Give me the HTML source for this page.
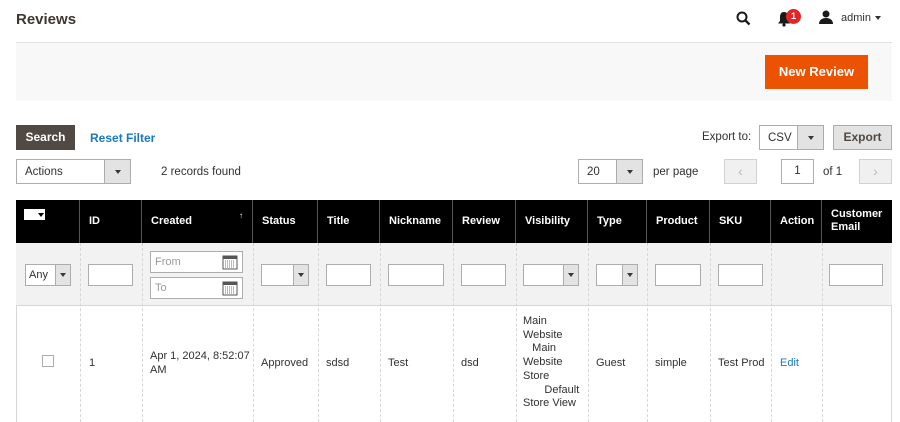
<!DOCTYPE html>
<html><head><meta charset="utf-8"><style>
*{box-sizing:border-box;margin:0;padding:0}
body{width:900px;height:422px;overflow:hidden;background:#fff;font-family:"Liberation Sans",sans-serif;color:#303030;font-size:11px;position:relative}
.a{position:absolute}
.inp{position:absolute;background:#fff;border:1px solid #adadad}
.sel{position:absolute;background:#fff;border:1px solid #adadad}
.sel .ar{position:absolute;right:0;top:0;bottom:0;background:#e3e3e3;border-left:1px solid #adadad}
.sel .ar:after{content:"";position:absolute;left:50%;top:50%;margin:-2px 0 0 -3px;border:3px solid transparent;border-top:4px solid #41362f;border-bottom:0}
.th{position:absolute;top:200px;height:43px;background:#000;color:#fff;font-weight:bold;font-size:11px;padding:15px 0 0 9px;border-right:1px solid #555}
.vl{position:absolute;top:243px;height:179px;border-left:1px dashed #d6d6d6}
.cell{position:absolute;font-size:11px;color:#303030;line-height:14px}
</style></head><body>
<div class="a" style="left:16px;top:11px;font-size:15px;font-weight:bold;color:#41362f">Reviews</div>
<svg class="a" style="left:736px;top:11px" width="15" height="15" viewBox="0 0 15 15"><circle cx="6" cy="6" r="4.5" fill="none" stroke="#1a1a1a" stroke-width="2"/><path d="M9.5 9.5L13.5 13.5" stroke="#1a1a1a" stroke-width="2.3"/></svg>
<svg class="a" style="left:777px;top:11px" width="14" height="16" viewBox="0 0 14 16"><path d="M7 1C4 1 3 3.5 3 6v4L1 12.5h12L11 10V6C11 3.5 10 1 7 1z" fill="#1a1a1a"/><circle cx="7" cy="14" r="1.6" fill="#1a1a1a"/></svg>
<div class="a" style="left:786px;top:9px;width:15px;height:15px;border-radius:50%;background:#e22626;color:#fff;font-size:9px;font-weight:bold;text-align:center;line-height:15px">1</div>
<svg class="a" style="left:819px;top:10px" width="14" height="14" viewBox="0 0 14 14"><circle cx="7" cy="4" r="3.5" fill="#1a1a1a"/><path d="M0 14c0-4 3-6 7-6s7 2 7 6z" fill="#1a1a1a"/></svg>
<div class="a" style="left:841px;top:12px;font-size:11px">admin</div>
<div class="a" style="left:875px;top:16px;border:3px solid transparent;border-top:4px solid #333"></div>
<div class="a" style="left:16px;top:42px;width:876px;height:59px;background:#f8f8f8;border-top:1px solid #e3e3e3"></div>
<div class="a" style="left:765px;top:55px;width:103px;height:34px;background:#eb5202;color:#fff;font-weight:bold;font-size:13px;text-align:center;line-height:34px">New Review</div>
<div class="a" style="left:16px;top:125px;width:59px;height:25px;background:#514943;color:#fff;font-weight:bold;font-size:12px;text-align:center;line-height:25px">Search</div>
<div class="a" style="left:90px;top:131px;color:#1979c3;font-weight:bold;font-size:12px">Reset Filter</div>
<div class="a" style="left:702px;top:131px;font-size:11.5px">Export to:</div>
<div class="sel" style="left:759px;top:125px;width:65px;height:25px"><span class="a" style="left:8px;top:6px;font-size:11.5px">CSV</span><div class="ar" style="width:26px"></div></div>
<div class="a" style="left:833px;top:125px;width:59px;height:25px;background:#e3e3e3;border:1px solid #adadad;font-weight:bold;font-size:12px;text-align:center;line-height:23px;color:#514943">Export</div>
<div class="sel" style="left:16px;top:159px;width:115px;height:25px"><span class="a" style="left:8px;top:6px;font-size:11.5px">Actions</span><div class="ar" style="width:26px"></div></div>
<div class="a" style="left:161px;top:166px;font-size:11.5px">2 records found</div>
<div class="sel" style="left:578px;top:159px;width:65px;height:25px"><span class="a" style="left:8px;top:6px;font-size:11.5px">20</span><div class="ar" style="width:26px"></div></div>
<div class="a" style="left:653px;top:166px;font-size:11.5px">per page</div>
<div class="a" style="left:724px;top:159px;width:33px;height:25px;background:#f0f0f0;border:1px solid #d1d1d1;color:#bbb;text-align:center;line-height:22px;font-size:14px">‹</div>
<div class="inp" style="left:781px;top:159px;width:33px;height:25px;text-align:center;line-height:23px;font-size:11.5px">1</div>
<div class="a" style="left:823px;top:166px;font-size:11.5px">of 1</div>
<div class="a" style="left:859px;top:159px;width:33px;height:25px;background:#f0f0f0;border:1px solid #d1d1d1;color:#bbb;text-align:center;line-height:22px;font-size:14px">›</div>

<div class="a" style="left:16px;top:243px;width:876px;height:63px;background:#f2f2f2;border-bottom:1px solid #d6d6d6"></div>
<div class="a" style="left:16px;top:306px;width:876px;height:116px;background:#fff;border-left:1px solid #d6d6d6;border-right:1px solid #d6d6d6"></div>

<div class="th" style="left:16px;width:64px;padding:0"><div class="a" style="left:8px;top:9px;width:21px;height:11px;background:#fff"></div><div class="a" style="left:22px;top:13px;border:3px solid transparent;border-top:4px solid #000"></div></div>
<div class="th" style="left:80px;width:62px">ID</div>
<div class="th" style="left:142px;width:111px">Created<span class="a" style="left:97px;top:11px;font-size:8px">↑</span></div>
<div class="th" style="left:253px;width:65px">Status</div>
<div class="th" style="left:318px;width:62px">Title</div>
<div class="th" style="left:380px;width:73px">Nickname</div>
<div class="th" style="left:453px;width:63px">Review</div>
<div class="th" style="left:516px;width:72px">Visibility</div>
<div class="th" style="left:588px;width:59px">Type</div>
<div class="th" style="left:647px;width:63px">Product</div>
<div class="th" style="left:710px;width:61px">SKU</div>
<div class="th" style="left:771px;width:51px">Action</div>
<div class="th" style="left:822px;width:70px;padding-top:8px;line-height:13px;border-right:0">Customer<br>Email</div>

<div class="vl" style="left:80px"></div><div class="vl" style="left:142px"></div><div class="vl" style="left:253px"></div><div class="vl" style="left:318px"></div><div class="vl" style="left:380px"></div><div class="vl" style="left:453px"></div><div class="vl" style="left:516px"></div><div class="vl" style="left:588px"></div><div class="vl" style="left:647px"></div><div class="vl" style="left:710px"></div><div class="vl" style="left:771px"></div><div class="vl" style="left:822px"></div>

<div class="sel" style="left:25px;top:264px;width:46px;height:22px"><span class="a" style="left:3px;top:4px">Any</span><div class="ar" style="width:15px"></div></div>
<div class="inp" style="left:88px;top:264px;width:45px;height:22px"></div>
<div class="inp" style="left:150px;top:251px;width:93px;height:22px"><span class="a" style="left:4px;top:4px;color:#999">From</span><svg class="a" style="left:71px;top:2px" width="16" height="16" viewBox="0 0 16 16"><rect x="1" y="2" width="14" height="13" fill="#fff" stroke="#555"/><rect x="1" y="2" width="14" height="3" fill="#555"/><path d="M3 7h10M3 9h10M3 11h10M3 13h10" stroke="#777" stroke-dasharray="1 1"/></svg></div>
<div class="inp" style="left:150px;top:277px;width:93px;height:22px"><span class="a" style="left:4px;top:4px;color:#999">To</span><svg class="a" style="left:71px;top:2px" width="16" height="16" viewBox="0 0 16 16"><rect x="1" y="2" width="14" height="13" fill="#fff" stroke="#555"/><rect x="1" y="2" width="14" height="3" fill="#555"/><path d="M3 7h10M3 9h10M3 11h10M3 13h10" stroke="#777" stroke-dasharray="1 1"/></svg></div>
<div class="sel" style="left:261px;top:264px;width:48px;height:22px"><div class="ar" style="width:15px"></div></div>
<div class="inp" style="left:326px;top:264px;width:45px;height:22px"></div>
<div class="inp" style="left:388px;top:264px;width:56px;height:22px"></div>
<div class="inp" style="left:461px;top:264px;width:45px;height:22px"></div>
<div class="sel" style="left:523px;top:264px;width:56px;height:22px"><div class="ar" style="width:15px"></div></div>
<div class="sel" style="left:596px;top:264px;width:42px;height:22px"><div class="ar" style="width:15px"></div></div>
<div class="inp" style="left:655px;top:264px;width:46px;height:22px"></div>
<div class="inp" style="left:718px;top:264px;width:45px;height:22px"></div>
<div class="inp" style="left:829px;top:264px;width:54px;height:22px"></div>

<div class="a" style="left:42px;top:355px;width:12px;height:12px;border:1px solid #adadad;background:#fff"></div>
<div class="cell" style="left:89px;top:356px">1</div>
<div class="cell" style="left:150px;top:349px">Apr 1, 2024, 8:52:07<br>AM</div>
<div class="cell" style="left:261px;top:356px">Approved</div>
<div class="cell" style="left:326px;top:356px">sdsd</div>
<div class="cell" style="left:388px;top:356px">Test</div>
<div class="cell" style="left:461px;top:356px">dsd</div>
<div class="cell" style="left:523px;top:315px;line-height:13.7px">Main<br>Website<br>&nbsp;&nbsp;&nbsp;Main<br>Website<br>Store<br>&nbsp;&nbsp;&nbsp;&nbsp;&nbsp;&nbsp;&nbsp;Default<br>Store View</div>
<div class="cell" style="left:596px;top:356px">Guest</div>
<div class="cell" style="left:655px;top:356px">simple</div>
<div class="cell" style="left:718px;top:356px">Test Prod</div>
<div class="cell" style="left:780px;top:356px;color:#1979c3">Edit</div>
</body></html>
